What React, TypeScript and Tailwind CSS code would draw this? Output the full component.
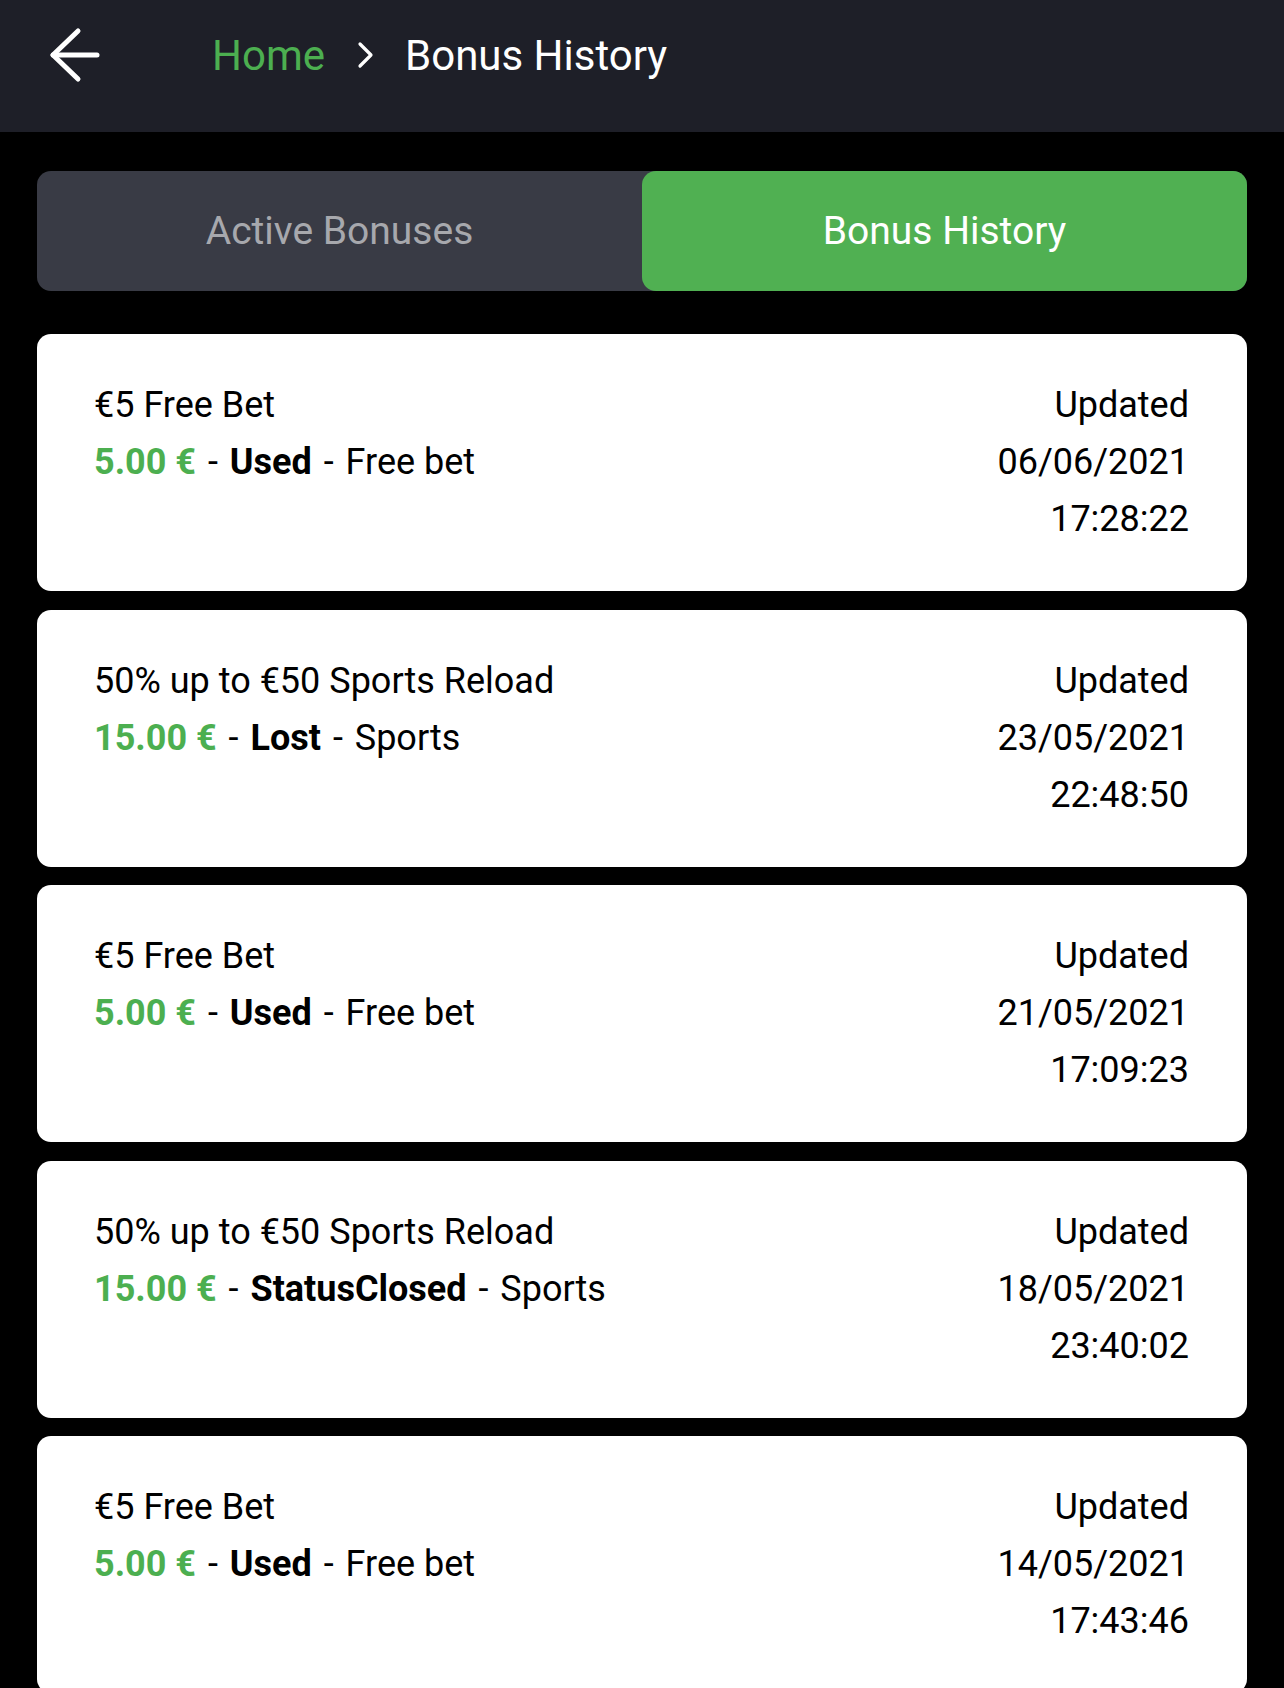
// Bonus history screen

type BonusEntry = {
  title: string
  amount: string
  status: string
  category: string
  date: string
  time: string
}

const entries: BonusEntry[] = [
  { title: '€5 Free Bet', amount: '5.00 €', status: 'Used', category: 'Free bet', date: '06/06/2021', time: '17:28:22' },
  { title: '50% up to €50 Sports Reload', amount: '15.00 €', status: 'Lost', category: 'Sports', date: '23/05/2021', time: '22:48:50' },
  { title: '€5 Free Bet', amount: '5.00 €', status: 'Used', category: 'Free bet', date: '21/05/2021', time: '17:09:23' },
  { title: '50% up to €50 Sports Reload', amount: '15.00 €', status: 'StatusClosed', category: 'Sports', date: '18/05/2021', time: '23:40:02' },
  { title: '€5 Free Bet', amount: '5.00 €', status: 'Used', category: 'Free bet', date: '14/05/2021', time: '17:43:46' },
]

function BackArrow() {
  return (
    <svg width="52" height="56" viewBox="0 0 52 56" fill="none" stroke="white" strokeWidth="5" strokeLinecap="round" strokeLinejoin="round">
      <path d="M5 28H49" />
      <path d="M30 4L5 28L30 52" />
    </svg>
  )
}

function Chevron() {
  return (
    <svg width="20" height="28" viewBox="0 0 20 28" fill="none" stroke="white" strokeWidth="3.2" strokeLinecap="round" strokeLinejoin="round">
      <path d="M4 3L15 14L4 25" />
    </svg>
  )
}

function Dash() {
  return <span className="px-[3px]"> - </span>
}

function BonusCard({ entry }: { entry: BonusEntry }) {
  return (
    <div className="flex justify-between rounded-[14px] bg-white pl-[57px] pr-[58px] py-[43px] text-[36px] leading-[57px] text-black">
      <div>
        <div>{entry.title}</div>
        <div>
          <span className="font-bold text-[#4caf50]">{entry.amount}</span>
          <Dash />
          <span className="font-bold">{entry.status}</span>
          <Dash />
          {entry.category}
        </div>
      </div>
      <div className="text-right">
        <div>Updated</div>
        <div>{entry.date}</div>
        <div>{entry.time}</div>
      </div>
    </div>
  )
}

export default function App() {
  return (
    <div className="min-h-screen bg-black font-['Roboto',sans-serif]">
      {/* Header */}
      <div className="h-[132px] bg-[#1e1f28]">
        <div className="flex h-[110px] items-center">
          <div className="ml-[48px]">
            <BackArrow />
          </div>
          <span className="ml-[112px] text-[42px] text-[#4caf50]">Home</span>
          <span className="ml-[31px]">
            <Chevron />
          </span>
          <span className="ml-[29px] text-[42px] text-white">Bonus History</span>
        </div>
      </div>

      <div className="px-[37px] pt-[39px]">
        {/* Tabs */}
        <div className="flex h-[120px] rounded-[14px] bg-[#393b45] text-[39px]">
          <button className="flex flex-1 items-center justify-center text-[#a7a8ad]">Active Bonuses</button>
          <button className="flex flex-1 items-center justify-center rounded-[14px] bg-[#50b052] text-white">Bonus History</button>
        </div>

        {/* Cards */}
        <div className="mt-[43px] flex flex-col gap-[18.5px]">
          {entries.map((entry, idx) => (
            <BonusCard key={idx} entry={entry} />
          ))}
        </div>
      </div>
    </div>
  )
}
